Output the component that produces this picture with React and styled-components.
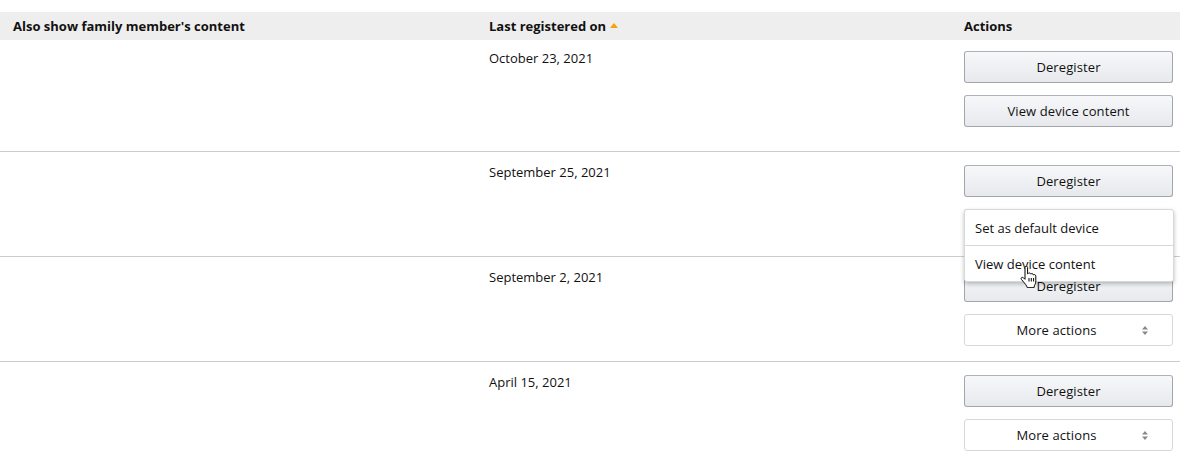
import React from "react";
import styled, { createGlobalStyle } from "styled-components";

const GlobalStyle = createGlobalStyle`
  body {
    margin: 0;
    background: #fff;
    font-family: "Open Sans", "Liberation Sans", Arial, sans-serif;
    color: #111;
  }
`;

const Page = styled.div`
  padding-top: 12px;
  width: 1180px;
`;

const Grid = styled.div`
  display: grid;
  grid-template-columns: 476px 475px 1fr;
  padding-left: 13px;
  padding-right: 7px;
`;

const HeadRow = styled(Grid)`
  background: #eeeeee;
  height: 28px;
  align-items: center;
  font-size: 13px;
  font-weight: 700;
`;

const HeadCell = styled.div`
  display: flex;
  align-items: center;
  gap: 4px;
`;

const SortUp = styled.span`
  width: 0;
  height: 0;
  border-left: 4px solid transparent;
  border-right: 4px solid transparent;
  border-bottom: 5px solid #f8a10b;
  margin-top: -1px;
`;

const Row = styled(Grid)`
  border-top: ${(p) => (p.first ? "none" : "1px solid #cccccc")};
  padding-top: ${(p) => (p.first ? "11px" : "13px")};
  padding-bottom: ${(p) => (p.first ? "24px" : "15px")};
`;

const DateCell = styled.div`
  font-size: 13px;
  line-height: 15px;
`;

const Actions = styled.div`
  display: flex;
  flex-direction: column;
  gap: 12px;
`;

const Button = styled.button`
  height: 32px;
  width: 100%;
  border-radius: 3px;
  border: 1px solid #a2a6ac;
  border-top-color: #adb1b8;
  background: linear-gradient(to bottom, #f7f8fa, #e7e9ec);
  font-family: inherit;
  font-size: 13px;
  letter-spacing: 0.1px;
  color: #111;
  cursor: pointer;
  padding: 0;
`;

const SelectWrap = styled.div`
  position: relative;
`;

const Select = styled.button`
  position: relative;
  height: 32px;
  width: 100%;
  border-radius: 3px;
  border: 1px solid #d5d9d9;
  background: #fff;
  font-family: inherit;
  font-size: 13px;
  letter-spacing: 0.1px;
  color: #111;
  padding: 0 24px 0 0;
`;

const Arrows = styled.svg`
  position: absolute;
  right: 24px;
  top: 11px;
`;

const Menu = styled.ul`
  position: absolute;
  top: 0;
  left: 0;
  right: -1px;
  margin: 0;
  padding: 0;
  list-style: none;
  background: #fff;
  border: 1px solid #d5d9d9;
  border-radius: 3px;
  box-shadow: 0 2px 4px rgba(0, 0, 0, 0.25);
  z-index: 2;
`;

const MenuItem = styled.li`
  height: 35px;
  display: flex;
  align-items: center;
  padding-left: 10px;
  font-size: 13px;
  border-top: ${(p) => (p.divider ? "1px solid #d5d9d9" : "none")};
`;

const Cursor = styled.svg`
  position: absolute;
  left: 56px;
  top: 57px;
  z-index: 3;
`;

const UpDown = () => (
  <Arrows width="6" height="9" viewBox="0 0 6 9">
    <path d="M0 3.5 L3 0 L6 3.5 Z" fill="#888" />
    <path d="M0 5.5 L3 9 L6 5.5 Z" fill="#888" />
  </Arrows>
);

const HandCursor = () => (
  <Cursor width="18" height="22" viewBox="0 0 18 22">
    <path
      d="M5 1.5c0-.8.6-1.3 1.3-1.3s1.3.5 1.3 1.3v6.3l.4-.1c.3-.6.9-.9 1.5-.8.6.1 1 .5 1.1 1l.2.2c.3-.4.8-.6 1.4-.5.6.1 1 .6 1.1 1.1l.1.2c.3-.3.8-.4 1.3-.3.7.2 1.1.8 1.1 1.5v4.6c0 2.1-.5 3.4-1.3 4.6l-.5 2.4H7.3l-.6-1.5c-.5-1-1.4-2.2-2.5-3.5L1.4 13.4c-.5-.6-.4-1.4.2-1.800.6-.4 1.4-.3 1.9.2L5 13.3Z"
      fill="#fff"
      stroke="#000"
      strokeWidth="1"
      strokeLinejoin="round"
    />
    <path d="M9 12v3.5M11.3 12v3.5M13.6 12v3.5" stroke="#000" strokeWidth="1" />
  </Cursor>
);

const rows = [
  { date: "October 23, 2021", second: "view" },
  { date: "September 25, 2021", second: "menu" },
  { date: "September 2, 2021", second: "more" },
  { date: "April 15, 2021", second: "more" },
];

const Second = ({ kind }) => {
  if (kind === "view") return <Button>View device content</Button>;
  return (
    <SelectWrap>
      <Select>
        More actions
        <UpDown />
      </Select>
      {kind === "menu" && (
        <>
          <Menu>
            <MenuItem>Set as default device</MenuItem>
            <MenuItem divider>View device content</MenuItem>
          </Menu>
          <HandCursor />
        </>
      )}
    </SelectWrap>
  );
};

export default function App() {
  return (
    <Page>
      <GlobalStyle />
      <HeadRow>
        <HeadCell>Also show family member's content</HeadCell>
        <HeadCell>
          Last registered on <SortUp />
        </HeadCell>
        <HeadCell>Actions</HeadCell>
      </HeadRow>
      {rows.map((r, i) => (
        <Row key={r.date} first={i === 0}>
          <div />
          <DateCell>{r.date}</DateCell>
          <Actions>
            <Button>Deregister</Button>
            <Second kind={r.second} />
          </Actions>
        </Row>
      ))}
    </Page>
  );
}
